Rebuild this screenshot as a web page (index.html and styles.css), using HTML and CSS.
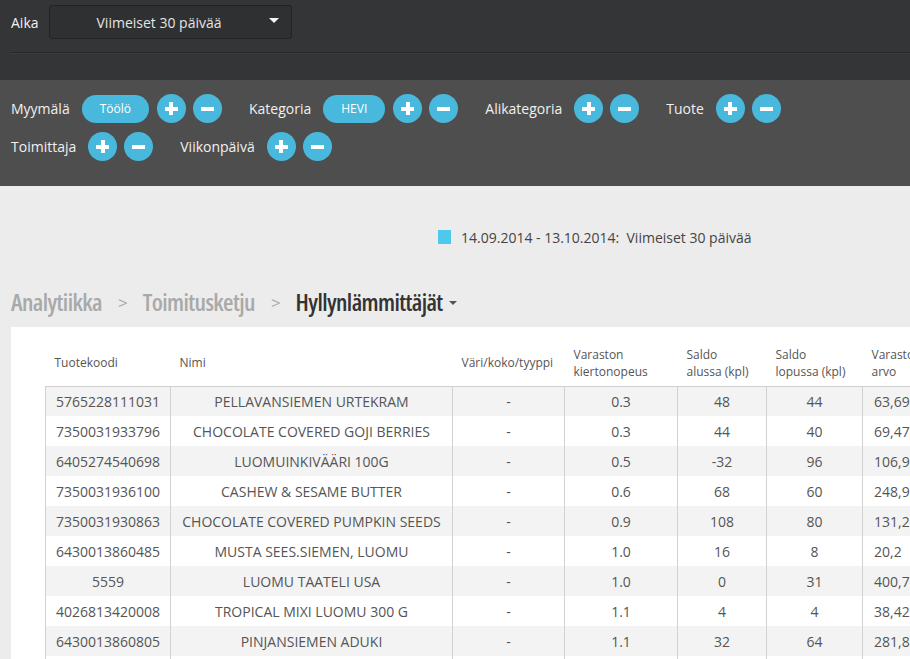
FILE: index.html
```html
<!DOCTYPE html>
<html lang="fi">
<head>
<meta charset="utf-8">
<title>Hyllynlämmittäjät</title>
<link rel="stylesheet" href="styles.css">
</head>
<body>
<header class="topbar">
  <div class="time-row">
    <span class="time-label">Aika</span>
    <div class="select">
      <span class="select-text">Viimeiset 30 päivää</span>
      <span class="select-caret"></span>
    </div>
  </div>
  <div class="divider"></div>
</header>

<section class="filters">
  <div class="filter-row">
    <div class="group">
      <span class="f-label">Myymälä</span>
      <span class="pill">Töölö</span>
      <span class="circle plus"></span>
      <span class="circle minus"></span>
    </div>
    <div class="group">
      <span class="f-label">Kategoria</span>
      <span class="pill">HEVI</span>
      <span class="circle plus"></span>
      <span class="circle minus"></span>
    </div>
    <div class="group">
      <span class="f-label">Alikategoria</span>
      <span class="circle plus"></span>
      <span class="circle minus"></span>
    </div>
    <div class="group">
      <span class="f-label">Tuote</span>
      <span class="circle plus"></span>
      <span class="circle minus"></span>
    </div>
  </div>
  <div class="filter-row">
    <div class="group">
      <span class="f-label">Toimittaja</span>
      <span class="circle plus"></span>
      <span class="circle minus"></span>
    </div>
    <div class="group">
      <span class="f-label">Viikonpäivä</span>
      <span class="circle plus"></span>
      <span class="circle minus"></span>
    </div>
  </div>
</section>

<main class="content">
  <div class="legend">
    <span class="swatch"></span>
    <span class="legend-text">14.09.2014 - 13.10.2014:&nbsp; Viimeiset 30 päivää</span>
  </div>

  <nav class="crumbs">
    <span class="crumb">Analytiikka</span>
    <span class="sep">&gt;</span>
    <span class="crumb">Toimitusketju</span>
    <span class="sep">&gt;</span>
    <span class="crumb current">Hyllynlämmittäjät</span>
    <span class="crumb-caret"></span>
  </nav>

  <div class="card">
    <table class="data">
      <colgroup>
        <col class="c1"><col class="c2"><col class="c3"><col class="c4"><col class="c5"><col class="c6"><col class="c7">
      </colgroup>
      <thead>
        <tr>
          <th>Tuotekoodi</th>
          <th>Nimi</th>
          <th>Väri/koko/tyyppi</th>
          <th>Varaston<br>kiertonopeus</th>
          <th>Saldo<br>alussa (kpl)</th>
          <th>Saldo<br>lopussa (kpl)</th>
          <th>Varaston<br>arvo</th>
        </tr>
      </thead>
      <tbody>
        <tr><td>5765228111031</td><td>PELLAVANSIEMEN URTEKRAM</td><td>-</td><td>0.3</td><td>48</td><td>44</td><td class="val">63,69</td></tr>
        <tr><td>7350031933796</td><td>CHOCOLATE COVERED GOJI BERRIES</td><td>-</td><td>0.3</td><td>44</td><td>40</td><td class="val">69,47</td></tr>
        <tr><td>6405274540698</td><td>LUOMUINKIVÄÄRI 100G</td><td>-</td><td>0.5</td><td>-32</td><td>96</td><td class="val">106,94</td></tr>
        <tr><td>7350031936100</td><td>CASHEW &amp; SESAME BUTTER</td><td>-</td><td>0.6</td><td>68</td><td>60</td><td class="val">248,95</td></tr>
        <tr><td>7350031930863</td><td>CHOCOLATE COVERED PUMPKIN SEEDS</td><td>-</td><td>0.9</td><td>108</td><td>80</td><td class="val">131,22</td></tr>
        <tr><td>6430013860485</td><td>MUSTA SEES.SIEMEN, LUOMU</td><td>-</td><td>1.0</td><td>16</td><td>8</td><td class="val">20,2</td></tr>
        <tr><td>5559</td><td>LUOMU TAATELI USA</td><td>-</td><td>1.0</td><td>0</td><td>31</td><td class="val">400,77</td></tr>
        <tr><td>4026813420008</td><td>TROPICAL MIXI LUOMU 300 G</td><td>-</td><td>1.1</td><td>4</td><td>4</td><td class="val">38,42</td></tr>
        <tr><td>6430013860805</td><td>PINJANSIEMEN ADUKI</td><td>-</td><td>1.1</td><td>32</td><td>64</td><td class="val">281,82</td></tr>
        <tr><td>6430013860812</td><td>MANTELI LUOMU</td><td>-</td><td>1.2</td><td>20</td><td>12</td><td class="val">54,10</td></tr>
      </tbody>
    </table>
  </div>
</main>
</body>
</html>
```

FILE: styles.css
```css
* { box-sizing: border-box; }

html, body {
  margin: 0;
  padding: 0;
  width: 910px;
  height: 659px;
  overflow: hidden;
}

body {
  font-family: "Open Sans", "Noto Sans", "DejaVu Sans", sans-serif;
  background: #ececec;
  color: #555;
}

/* ---------- top bar ---------- */
.topbar {
  height: 80px;
  background: #343537;
}

.time-row {
  display: flex;
  align-items: center;
  padding: 5px 0 0 11px;
}

.time-label {
  color: #f2f2f2;
  font-size: 14px;
  margin-right: 10px;
}

.select {
  width: 243px;
  height: 34px;
  display: flex;
  align-items: center;
  background: #2f3032;
  border: 1px solid #222324;
  border-radius: 3px;
}

.select-text {
  flex: 1;
  text-align: center;
  color: #e4e4e4;
  font-size: 14px;
  padding-left: 6px;
}

.select-caret {
  width: 0;
  height: 0;
  border-left: 5px solid transparent;
  border-right: 5px solid transparent;
  border-top: 5px solid #f4f4f4;
  margin: 0 12px 4px 6px;
}

.divider {
  margin: 13px 0 0 10px;
  border-top: 1px solid #28292a;
  border-bottom: 1px solid #3b3c3e;
}

/* ---------- filters ---------- */
.filters {
  height: 106px;
  background: #4e4e4e;
  padding: 14px 0 0 11px;
  display: flex;
  flex-direction: column;
  gap: 9px;
}

.filter-row {
  display: flex;
  align-items: center;
  gap: 27px;
}

.group {
  display: flex;
  align-items: center;
  height: 29px;
}

.f-label {
  color: #f0f0f0;
  font-size: 14px;
  margin-right: 12px;
}

.pill {
  height: 28px;
  line-height: 28px;
  padding: 0 18px;
  border-radius: 14px;
  background: #48b9dc;
  color: #fff;
  font-size: 12px;
  margin-right: 8px;
}

.circle {
  position: relative;
  width: 29px;
  height: 29px;
  border-radius: 50%;
  background: #48b9dc;
}

.circle + .circle { margin-left: 7px; }

.circle::before,
.circle::after {
  content: "";
  position: absolute;
  left: 50%;
  top: 50%;
  background: #fff;
}

.circle::before {
  width: 13px;
  height: 4px;
  margin: -2px 0 0 -6.5px;
}

.plus::after {
  width: 4px;
  height: 13px;
  margin: -6.5px 0 0 -2px;
}

.minus::after { display: none; }

/* ---------- content ---------- */
.content {
  padding-top: 44px;
}

.legend {
  display: flex;
  align-items: center;
  margin-left: 438px;
  height: 14px;
}

.swatch {
  width: 13px;
  height: 14px;
  background: #4cc9ec;
  margin-right: 10px;
}

.legend-text {
  font-size: 14px;
  color: #444;
  white-space: pre;
}

.crumbs {
  display: flex;
  align-items: center;
  height: 30px;
  margin: 42px 0 0 11px;
  font-family: "Open Sans", sans-serif;
}

.crumb {
  font-size: 24px;
  font-weight: 600;
  color: #a9a9a9;
  font-stretch: 75%;
  letter-spacing: -0.6px;
}

.crumb.current {
  color: #333;
}

.sep {
  font-size: 17px;
  color: #a9a9a9;
  margin: 2px 15px 0 16px;
}

.crumb-caret {
  width: 0;
  height: 0;
  border-left: 4px solid transparent;
  border-right: 4px solid transparent;
  border-top: 4px solid #555;
  margin: 3px 0 0 6px;
}

.card {
  margin: 11px 0 0 11px;
  background: #fff;
  padding: 13px 0 0 34px;
  height: 400px;
}

.data {
  border-collapse: collapse;
  table-layout: fixed;
  width: 940px;
}

.c1 { width: 125px; }
.c2 { width: 282px; }
.c3 { width: 112px; }
.c4 { width: 113px; }
.c5 { width: 89px; }
.c6 { width: 96px; }
.c7 { width: 123px; }

.data th {
  height: 46px;
  padding: 0 0 0 9px;
  text-align: left;
  vertical-align: middle;
  font-weight: normal;
  font-size: 12px;
  line-height: 17px;
  color: #555;
  border-bottom: 1px solid #cfcfcf;
  white-space: nowrap;
}

.data td {
  height: 30px;
  padding: 0 4px;
  text-align: center;
  font-size: 14px;
  color: #555;
  border-left: 1px solid #d2d2d2;
  border-right: 1px solid #d2d2d2;
  white-space: nowrap;
}

.data tbody tr:nth-child(odd) td {
  background: #f3f3f3;
}

.data td.val {
  text-align: left;
  padding-left: 11px;
}
```
